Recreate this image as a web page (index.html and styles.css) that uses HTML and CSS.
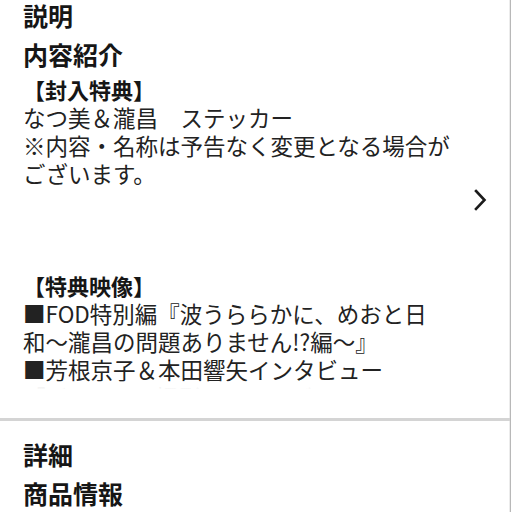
FILE: index.html
```html
<!DOCTYPE html>
<html lang="ja">
<head>
<meta charset="utf-8">
<link rel="stylesheet" href="styles.css">
</head>
<body>
<div class="page">
  <section class="sec sec-desc">
    <div class="col">
      <div class="label">説明</div>
      <div class="title">内容紹介</div>
      <div class="desc">
        <div class="ln sub">【封入特典】</div>
        <div class="ln">なつ美＆瀧昌　ステッカー</div>
        <div class="ln">※内容・名称は予告なく変更となる場合が</div>
        <div class="ln">ございます。</div>
        <div class="ln blank"></div>
        <div class="ln blank"></div>
        <div class="ln blank"></div>
        <div class="ln sub">【特典映像】</div>
        <div class="ln">■FOD特別編『波うららかに、めおと日</div>
        <div class="ln">和～瀧昌の問題ありません!?編～』</div>
        <div class="ln">■芳根京子＆本田響矢インタビュー</div>
        <div class="ln">「ビジュアル撮影メイキング」</div>
      </div>
    </div>
    <div class="chev">
      <svg width="14" height="22" viewBox="0 0 14 22"><path d="M3 2 L11.5 11 L3 20" fill="none" stroke="#1b1b1b" stroke-width="2.6" stroke-linecap="square" stroke-linejoin="miter"/></svg>
    </div>
  </section>
  <div class="divider"></div>
  <section class="sec sec-detail">
    <div class="label">詳細</div>
    <div class="title">商品情報</div>
  </section>
</div>
</body>
</html>
```
FILE: styles.css
```css
html, body {
  margin: 0;
  padding: 0;
  background: #fff;
}
body {
  font-family: "Noto Sans CJK JP", "Noto Sans", sans-serif;
  color: #1e1e1e;
}
.page {
  width: 510px;
  height: 512px;
  overflow: hidden;
  border-right: 1px solid #b8b8b8;
  box-shadow: inset -6px 0 0 -5px #ececec;
}
.sec {
  padding-left: 23px;
}
.sec-desc {
  display: flex;
  align-items: flex-start;
  height: 418px;
}
.col {
  flex: 1;
  min-width: 0;
}
.label, .title {
  font-size: 25px;
  line-height: 30px;
  font-weight: 700;
  color: #161616;
}
.title {
  margin-top: 9px;
}
.desc {
  position: relative;
  margin-top: 6px;
  height: 315px;
  overflow: hidden;
}
.desc::after {
  content: "";
  position: absolute;
  left: 0;
  right: 0;
  bottom: 0;
  height: 9px;
  background: linear-gradient(to bottom, rgba(255,255,255,0.55), #fff 90%);
}
.ln {
  font-size: 22.5px;
  line-height: 28px;
  height: 28px;
  white-space: nowrap;
  color: #222;
}
.sub {
  font-weight: 700;
  font-size: 22px;
  color: #161616;
}
.chev {
  width: 14px;
  margin: 189px 23px 0 8px;
}
.chev svg {
  display: block;
}
.divider {
  height: 3px;
  background: #d4d4d4;
}
.sec-detail {
  padding-top: 18px;
}
```
